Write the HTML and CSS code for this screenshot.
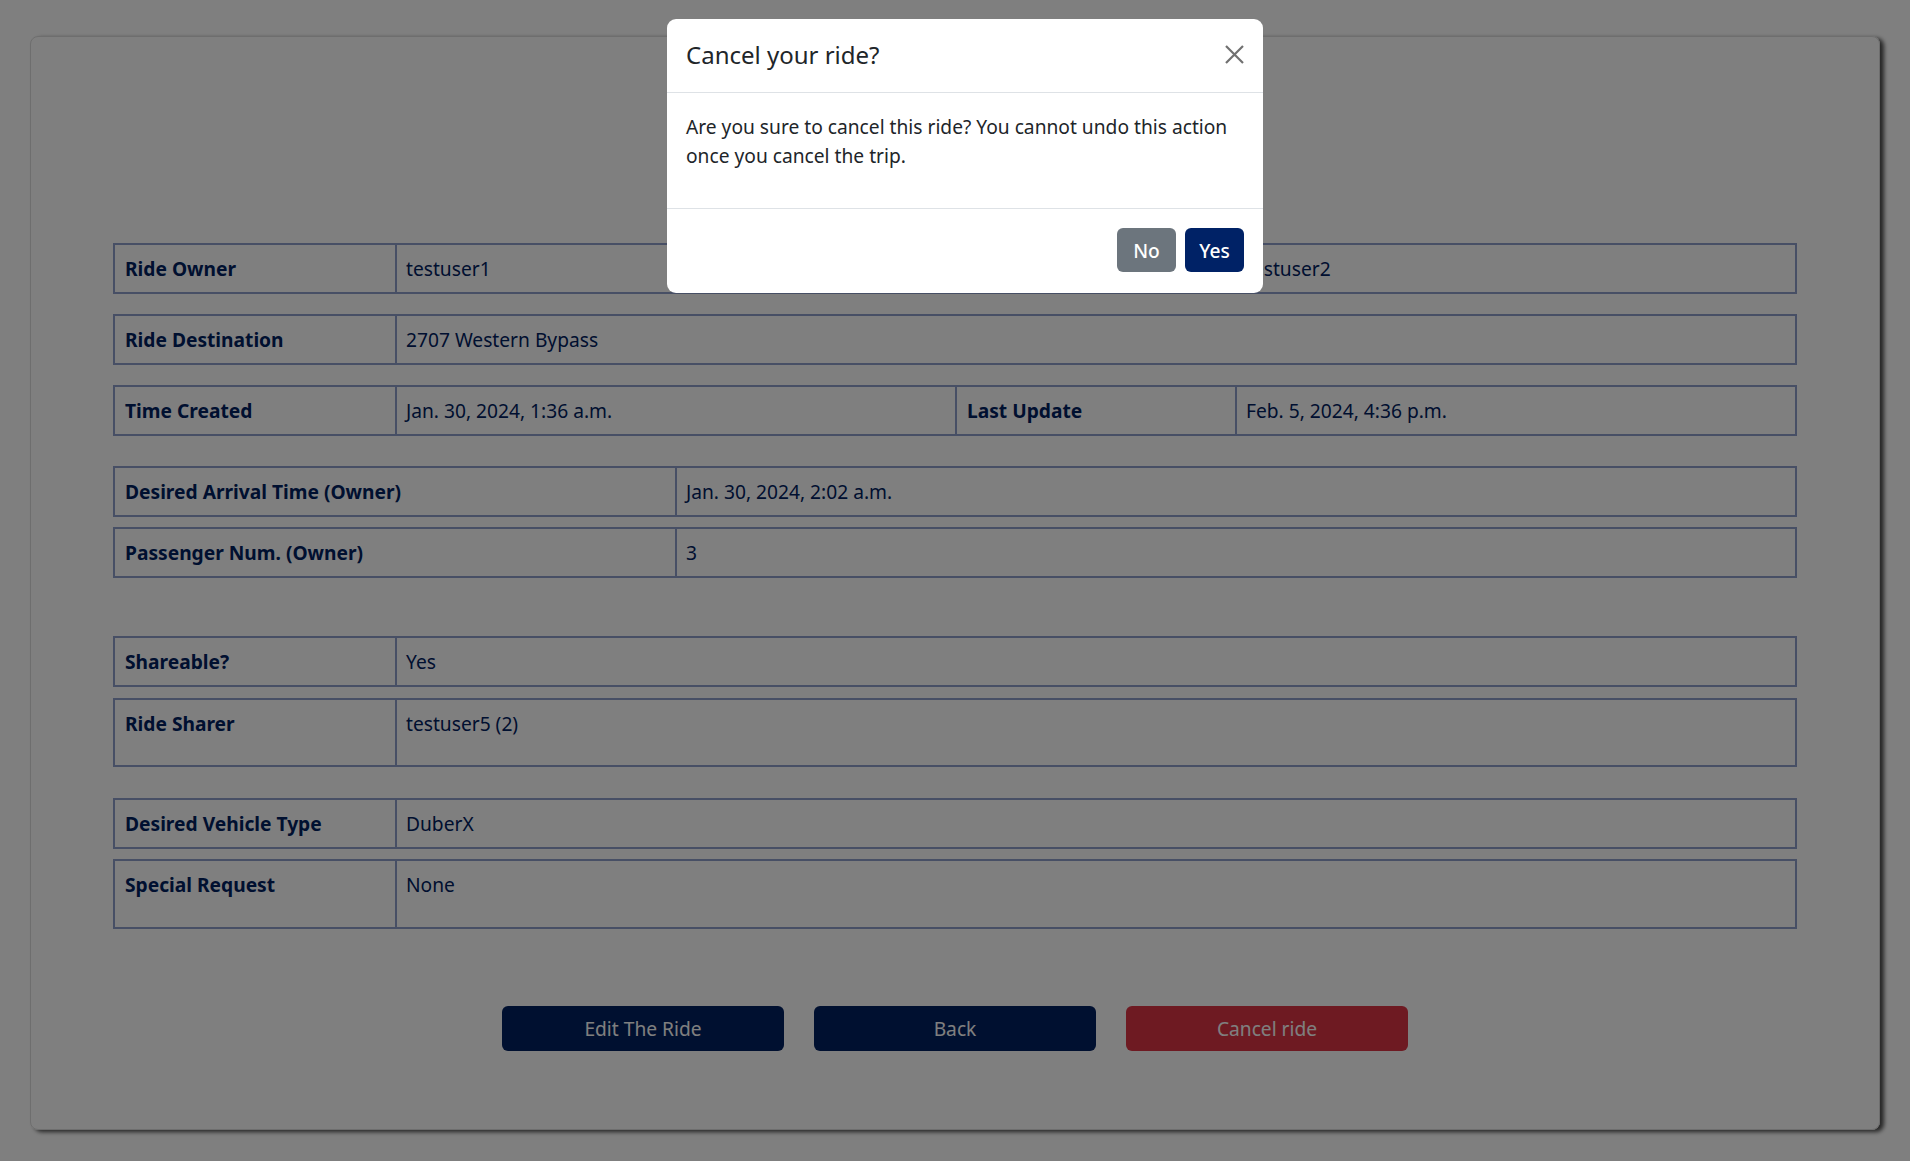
FILE: index.html
```html
<!DOCTYPE html>
<html lang="en">
<head>
<meta charset="utf-8">
<title>Ride Detail</title>
<link rel="stylesheet" href="styles.css">
</head>
<body>
<div class="page">
  <div class="card">
    <div class="group group-a">
      <div class="row cols-4">
        <div class="cell label">Ride Owner</div>
        <div class="cell">testuser1</div>
        <div class="cell label">Driver</div>
        <div class="cell">testuser2</div>
      </div>
      <div class="row cols-2">
        <div class="cell label">Ride Destination</div>
        <div class="cell">2707 Western Bypass</div>
      </div>
      <div class="row cols-4">
        <div class="cell label">Time Created</div>
        <div class="cell">Jan. 30, 2024, 1:36 a.m.</div>
        <div class="cell label">Last Update</div>
        <div class="cell">Feb. 5, 2024, 4:36 p.m.</div>
      </div>
    </div>

    <div class="group group-b">
      <div class="row cols-wide">
        <div class="cell label">Desired Arrival Time (Owner)</div>
        <div class="cell">Jan. 30, 2024, 2:02 a.m.</div>
      </div>
      <div class="row cols-wide">
        <div class="cell label">Passenger Num. (Owner)</div>
        <div class="cell">3</div>
      </div>
    </div>

    <div class="group group-c">
      <div class="row cols-2">
        <div class="cell label">Shareable?</div>
        <div class="cell">Yes</div>
      </div>
      <div class="row cols-2">
        <div class="cell label">Ride Sharer</div>
        <div class="cell"><p class="cell-p">testuser5 (2)</p></div>
      </div>
    </div>

    <div class="group group-d">
      <div class="row cols-2">
        <div class="cell label">Desired Vehicle Type</div>
        <div class="cell">DuberX</div>
      </div>
      <div class="row cols-2">
        <div class="cell label">Special Request</div>
        <div class="cell"><p class="cell-p cell-p-tall">None</p></div>
      </div>
    </div>

    <div class="actions">
      <button class="btn btn-navy">Edit The Ride</button>
      <button class="btn btn-navy">Back</button>
      <button class="btn btn-red">Cancel ride</button>
    </div>
  </div>
</div>

<div class="backdrop"></div>

<div class="modal-wrap">
  <div class="modal">
    <div class="modal-header">
      <h5 class="modal-title">Cancel your ride?</h5>
      <button class="btn-close" aria-label="Close">
        <svg width="19" height="19" viewBox="0 0 19 19"><path d="M1 1 L18 18 M18 1 L1 18" stroke="#707070" stroke-width="2.2" fill="none"/></svg>
      </button>
    </div>
    <div class="modal-body">
      <p class="modal-text">Are you sure to cancel this ride? You cannot undo this action once you cancel the trip.</p>
    </div>
    <div class="modal-footer">
      <button class="mbtn mbtn-gray">No</button>
      <button class="mbtn mbtn-navy">Yes</button>
    </div>
  </div>
</div>
</body>
</html>
```

FILE: styles.css
```css
* { box-sizing: border-box; }

body {
  margin: 0;
  background: #ffffff;
  font-family: "Noto Sans", "Open Sans", sans-serif;
  font-size: 19.2px;
  color: #002060;
}

.page {
  padding: 36px 30px 31px 30px;
}

.card {
  border: 1px solid #dcdcdc;
  border-radius: 8px;
  box-shadow: 4px 2px 4px rgba(0, 0, 0, 0.7);
  padding: 206px 82px 78px 82px;
  height: 1094px;
}

.group {
  display: flex;
  flex-direction: column;
  gap: 10px;
}

.group-a { gap: 20px; }
.group-b { margin-top: 30px; }
.group-c { margin-top: 58px; gap: 11px; }
.group-d { margin-top: 31px; }

.row {
  display: grid;
  border: 2px solid #8f9ecb;
}

.cols-4 { grid-template-columns: 1fr 2fr 1fr 2fr; }
.cols-2 { grid-template-columns: 1fr 5fr; }
.cols-wide { grid-template-columns: 2fr 4fr; }

.cell {
  padding: 9px 10px 9px 9px;
  line-height: 29px;
  white-space: nowrap;
}

.cell + .cell {
  border-left: 2px solid #8f9ecb;
}

.label {
  font-weight: 700;
  padding-left: 10px;
}

.cell-p {
  margin: 0 0 18px 0;
}

.cell-p-tall {
  margin-bottom: 19px;
}

.actions {
  margin-top: 77px;
  display: flex;
  justify-content: center;
  gap: 30px;
}

.btn {
  width: 282px;
  height: 45px;
  border: none;
  border-radius: 6px;
  color: #ffffff;
  font-family: "Noto Sans", "Open Sans", sans-serif;
  font-size: 19.2px;
}

.btn-navy { background: #002060; }
.btn-red { background: #dc3545; }

.backdrop {
  position: fixed;
  inset: 0;
  background: rgba(0, 0, 0, 0.5);
}

.modal-wrap {
  position: fixed;
  inset: 0;
  display: flex;
  justify-content: center;
  align-items: flex-start;
  padding: 19px 0 0 20px;
}

.modal {
  width: 596px;
  background: #ffffff;
  border-radius: 9px;
  color: #212529;
}

.modal-header {
  display: flex;
  align-items: center;
  justify-content: space-between;
  padding: 18px 19px 20px 19px;
  border-bottom: 1px solid #dee2e6;
}

.modal-title {
  margin: 0;
  font-size: 24px;
  font-weight: 400;
  line-height: 35px;
}

.btn-close {
  border: none;
  background: transparent;
  padding: 0;
  width: 19px;
  height: 19px;
  display: flex;
}

.modal-body {
  padding: 19px 19px 19px 19px;
}

.modal-text {
  margin: 0 0 19px 0;
  line-height: 29px;
  font-size: 19.2px;
}

.modal-footer {
  display: flex;
  justify-content: flex-end;
  gap: 9px;
  padding: 19px 19px 21px 19px;
  border-top: 1px solid #dee2e6;
}

.mbtn {
  height: 44px;
  min-width: 59px;
  padding: 0 13px;
  border: none;
  border-radius: 6px;
  color: #ffffff;
  font-family: "Noto Sans", "Open Sans", sans-serif;
  font-size: 19.2px;
  font-weight: 500;
  text-align: center;
}

.mbtn-gray { background: #6c757d; }
.mbtn-navy { background: #002266; }
```
